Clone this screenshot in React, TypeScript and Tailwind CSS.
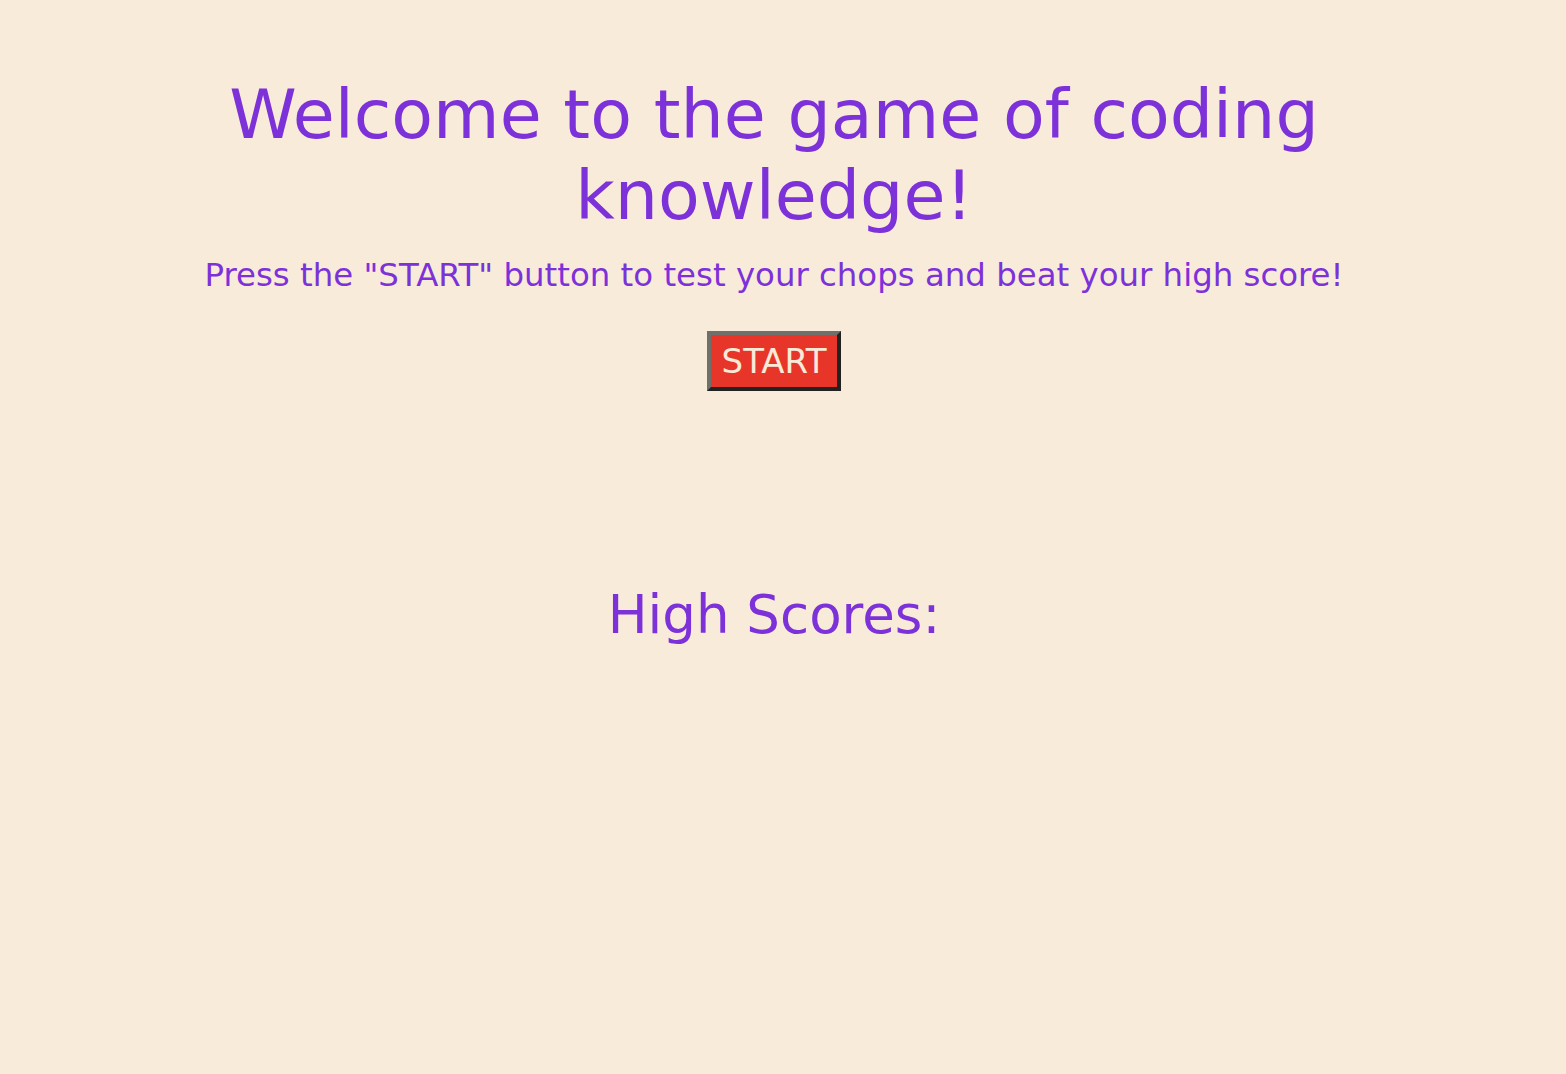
import React from 'react';

export default function App() {
  const handleStart = () => {
    // quiz starts here
  };

  return (
    <div className="min-h-screen w-full pr-[18px] bg-[#f8ebda] text-[#7d31d9] font-['DejaVu_Sans',Verdana,sans-serif] flex flex-col items-center text-center">
      <h1 className="mt-[74px] text-[68.3px] leading-[81px] max-w-[1200px]">
        Welcome to the game of coding knowledge!
      </h1>
      <p className="mt-[19px] text-[32.4px] leading-[41px]">
        Press the "START" button to test your chops and beat your high score!
      </p>
      <button
        onClick={handleStart}
        className="mt-[35px] h-[60px] px-[11px] bg-[#e8352a] text-[#f9ead8] text-[34px] leading-none border-4 border-t-[#6f6f6b] border-l-[#6f6f6b] border-r-[#222220] border-b-[#222220] cursor-pointer"
      >
        START
      </button>
      <h2 className="mt-[194px] text-[53px] leading-[60px]">High Scores:</h2>
      <ul id="high-scores" className="mt-4"></ul>
    </div>
  );
}
